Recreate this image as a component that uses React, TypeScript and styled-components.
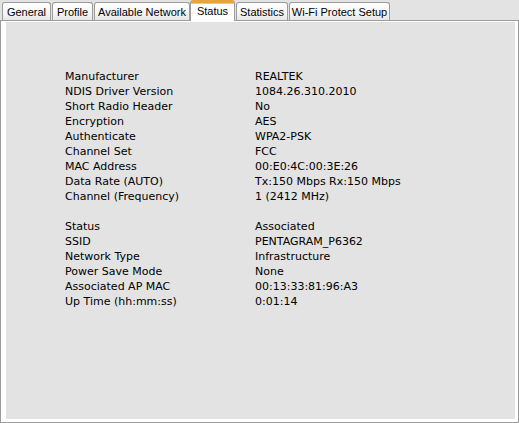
import React from "react";
import styled, { createGlobalStyle } from "styled-components";

const Global = createGlobalStyle`
  html, body { margin: 0; padding: 0; background: #e3e3e3; }
  * { box-sizing: border-box; }
`;

const Window = styled.div`
  width: 519px;
  height: 423px;
  display: flex;
  flex-direction: column;
  background: #e3e3e3;
  font-family: "DejaVu Sans", Verdana, sans-serif;
  color: #000;
`;

const TabStrip = styled.div`
  height: 20px;
  display: flex;
  align-items: flex-end;
  gap: 1px;
  padding-left: 2px;
  position: relative;
  z-index: 1;
`;

const Tab = styled.div<{ $w: number; $active?: boolean }>`
  width: ${(p) => p.$w}px;
  height: ${(p) => (p.$active ? 21 : 18)}px;
  margin-bottom: ${(p) => (p.$active ? -1 : 0)}px;
  margin-left: ${(p) => (p.$active ? -1 : 0)}px;
  display: flex;
  justify-content: center;
  align-items: flex-start;
  padding-top: 3px;
  font-family: "Liberation Sans", Arial, sans-serif;
  font-size: 11px;
  line-height: 13px;
  white-space: nowrap;
  border: 1px solid #9c9c9c;
  border-bottom: none;
  border-radius: 3px 3px 0 0;
  background: ${(p) =>
    p.$active
      ? "#ffffff"
      : "linear-gradient(#ffffff 0%, #f7f7f7 55%, #e6e6e6 100%)"};
  ${(p) =>
    p.$active &&
    `
    border-top: 3px solid #e8a33a;
    box-shadow: inset 0 1px 0 #ffc95a;
    padding-top: 2px;
  `}
`;

const Panel = styled.div`
  flex: 1;
  display: flex;
  border: 1px solid #9d9d9d;
  background: #ffffff;
  padding: 1px 3px 3px 5px;
`;

const Page = styled.div`
  flex: 1;
  background: #e3e3e3;
  padding: 47px 0 0 59px;
`;

const InfoGrid = styled.div`
  display: grid;
  grid-template-columns: 190px auto;
  font-size: 11px;
  line-height: 15px;
`;

const Label = styled.div`
  white-space: nowrap;
`;

const Value = styled.div`
  white-space: nowrap;
`;

const Spacer = styled.div`
  grid-column: 1 / span 2;
  height: 15px;
`;

const tabs: { label: string; w: number; active?: boolean }[] = [
  { label: "General", w: 49 },
  { label: "Profile", w: 41 },
  { label: "Available Network", w: 96 },
  { label: "Status", w: 45, active: true },
  { label: "Statistics", w: 52 },
  { label: "Wi-Fi Protect Setup", w: 101 },
];

const group1: [string, string][] = [
  ["Manufacturer", "REALTEK"],
  ["NDIS Driver Version", "1084.26.310.2010"],
  ["Short Radio Header", "No"],
  ["Encryption", "AES"],
  ["Authenticate", "WPA2-PSK"],
  ["Channel Set", "FCC"],
  ["MAC Address", "00:E0:4C:00:3E:26"],
  ["Data Rate (AUTO)", "Tx:150 Mbps Rx:150 Mbps"],
  ["Channel (Frequency)", "1 (2412 MHz)"],
];

const group2: [string, string][] = [
  ["Status", "Associated"],
  ["SSID", "PENTAGRAM_P6362"],
  ["Network Type", "Infrastructure"],
  ["Power Save Mode", "None"],
  ["Associated AP MAC", "00:13:33:81:96:A3"],
  ["Up Time (hh:mm:ss)", "0:01:14"],
];

export default function App() {
  return (
    <Window>
      <Global />
      <TabStrip>
        {tabs.map((t) => (
          <Tab key={t.label} $w={t.w} $active={t.active}>
            {t.label}
          </Tab>
        ))}
      </TabStrip>
      <Panel>
        <Page>
          <InfoGrid>
            {group1.map(([k, v]) => (
              <React.Fragment key={k}>
                <Label>{k}</Label>
                <Value>{v}</Value>
              </React.Fragment>
            ))}
            <Spacer />
            {group2.map(([k, v]) => (
              <React.Fragment key={k}>
                <Label>{k}</Label>
                <Value>{v}</Value>
              </React.Fragment>
            ))}
          </InfoGrid>
        </Page>
      </Panel>
    </Window>
  );
}
